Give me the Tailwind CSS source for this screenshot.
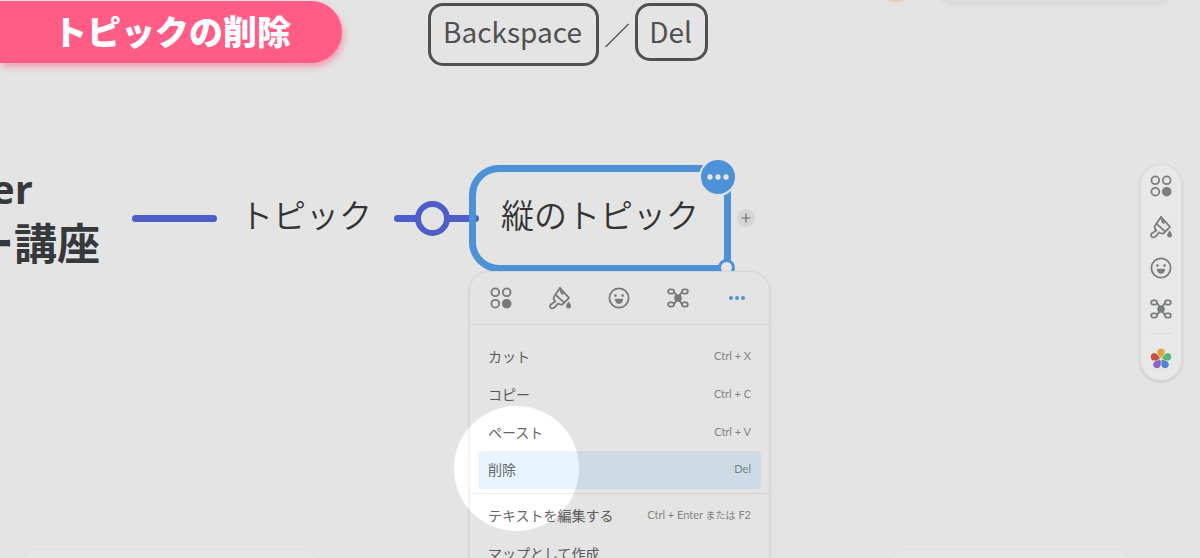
<!DOCTYPE html>
<html lang="ja">
<head>
  <meta charset="UTF-8">
  <meta name="viewport" content="width=device-width, initial-scale=1">
  <title>トピックの削除</title>
  <script src="https://cdn.jsdelivr.net/npm/@tailwindcss/browser@4"></script>
</head>
<body class="relative h-screen overflow-hidden bg-white font-['Noto_Sans_CJK_JP',sans-serif] text-[#3c4043]">

  <!-- Shared icons -->
  <svg class="hidden" aria-hidden="true">
    <symbol id="icon-style" viewBox="0 0 24 24" fill="none" stroke="currentColor" stroke-width="1.8">
      <circle cx="6.3" cy="6.3" r="3.9"/>
      <circle cx="17.7" cy="6.3" r="3.9"/>
      <circle cx="6.3" cy="17.7" r="3.9"/>
      <circle cx="17.7" cy="17.7" r="3.9" fill="currentColor"/>
    </symbol>
    <symbol id="icon-brush" viewBox="0 0 24 24" fill="none" stroke="currentColor" stroke-width="1.8" stroke-linejoin="round" stroke-linecap="round">
      <path d="M12 2L21 11.8L14.8 18C13.2 19.2 11.6 18.6 10.2 17.4L7.2 20.8C5.8 22.6 3.4 22.8 2.4 21.4C1.4 19.8 2.4 18.4 3.8 17.8L7.4 15.6C5.6 13.8 5 11.8 6.6 9.8Z"/>
      <path d="M7.6 8.8L16.2 16.6M12 2L13.6 7.2M15.4 5.8L14.6 8"/>
      <path d="M20.6 15.6C22 17.4 23 18.8 23 20.2A2.4 2.4 0 0 1 18.2 20.2C18.2 18.8 19.2 17.4 20.6 15.6Z" fill="currentColor" stroke="none"/>
    </symbol>
    <symbol id="icon-face" viewBox="0 0 24 24" fill="none" stroke="currentColor" stroke-width="1.8">
      <circle cx="12" cy="12" r="9.6"/>
      <circle cx="8.4" cy="9.6" r="1.3" fill="currentColor" stroke="none"/>
      <circle cx="15.6" cy="9.6" r="1.3" fill="currentColor" stroke="none"/>
      <path d="M7.8 12.8H16.2C16.2 15.8 14.4 17.8 12 17.8S7.8 15.8 7.8 12.8Z" fill="currentColor" stroke="none"/>
    </symbol>
    <symbol id="icon-map" viewBox="0 0 24 24" fill="none" stroke="currentColor" stroke-width="1.8">
      <path d="M7.4 5.6C9.4 6.4 9.6 9 12 12C14.4 9 14.6 6.4 16.6 5.6M7.4 18.4C9.4 17.6 9.6 15 12 12C14.4 15 14.6 17.6 16.6 18.4"/>
      <circle cx="12" cy="12" r="3.8" fill="currentColor" stroke="none"/>
      <rect x="2.2" y="3.4" width="5.8" height="4.2" rx="2.1"/>
      <rect x="16" y="3.4" width="5.8" height="4.2" rx="2.1"/>
      <rect x="2.2" y="16.4" width="5.8" height="4.2" rx="2.1"/>
      <rect x="16" y="16.4" width="5.8" height="4.2" rx="2.1"/>
    </symbol>
    <symbol id="icon-more" viewBox="0 0 24 24" fill="currentColor">
      <circle cx="6" cy="12" r="2"/>
      <circle cx="12" cy="12" r="2"/>
      <circle cx="18" cy="12" r="2"/>
    </symbol>
  </svg>

  <!-- Mind map canvas -->
  <main>
    <h2 class="absolute -left-[29px] top-[164px] whitespace-nowrap text-[43px] leading-[54px] font-bold">
      <span class="block pl-5 font-['Open_Sans',sans-serif] text-[40px] leading-[50px]">er</span>
      <span class="block">ー講座</span>
    </h2>
    <div class="absolute left-[132px] top-[215px] h-[7px] w-[85px] rounded-full bg-[#586ae0]"></div>
    <div class="absolute left-[240px] top-[190px] whitespace-nowrap text-[33px] leading-[48px] font-[350] text-[#3a3a3a]">トピック</div>

    <div class="absolute left-[394px] top-[215px] h-[7px] w-[85px] rounded-full bg-[#586ae0]"></div>
    <button type="button" aria-label="折りたたむ" class="absolute left-[415px] top-[201px] size-[35px] rounded-full border-[6px] border-[#586ae0] bg-white"></button>

    <div class="absolute left-[469px] top-[165px] flex h-[107px] w-[262px] items-start justify-center rounded-l-[30px] rounded-r-lg border-[7px] border-[#57a4f1] pt-[18px] text-[33px] leading-[48px] font-[350] whitespace-nowrap text-[#3a3a3a]">縦のトピック</div>
    <button type="button" aria-label="メニュー" class="absolute left-[699px] top-[158px] flex size-[38px] items-center justify-center rounded-full border-2 border-white bg-[#57a4f1] text-white">
      <svg class="size-8"><use href="#icon-more"/></svg>
    </button>
    <div class="absolute left-[718px] top-[259px] size-[17px] rounded-full border-3 border-[#57a4f1] bg-white"></div>
    <button type="button" aria-label="追加" class="absolute left-[737px] top-[209px] flex size-[18px] items-center justify-center rounded-full bg-[#efefef] text-[#777]">
      <svg class="size-[10px]" viewBox="0 0 10 10" stroke="currentColor" stroke-width="1.2"><path d="M5 0.5V9.5M0.5 5H9.5"/></svg>
    </button>
  </main>

  <!-- Context menu -->
  <div class="absolute left-[469px] top-[271px] w-[301px] rounded-t-[20px] border border-[#f0f0f0] bg-white shadow-sm">
    <div class="flex h-[53px] items-center justify-between border-b border-[#f2f2f2] pr-5 pl-[19px] text-[#868989]">
      <button type="button" aria-label="スタイル"><svg class="size-6"><use href="#icon-style"/></svg></button>
      <button type="button" aria-label="塗りつぶし"><svg class="size-6"><use href="#icon-brush"/></svg></button>
      <button type="button" aria-label="絵文字"><svg class="size-6"><use href="#icon-face"/></svg></button>
      <button type="button" aria-label="レイアウト"><svg class="size-6"><use href="#icon-map"/></svg></button>
      <button type="button" aria-label="その他" class="text-[#57a4f1]"><svg class="size-6"><use href="#icon-more"/></svg></button>
    </div>
    <div class="px-2 pt-3 text-[14px] text-[#666]">
      <button type="button" class="flex h-[38px] w-full items-center justify-between px-[10px]">カット<kbd class="font-['Lato','Noto_Sans_CJK_JP',sans-serif] text-[11px] text-[#929292]">Ctrl + X</kbd></button>
      <button type="button" class="flex h-[38px] w-full items-center justify-between px-[10px]">コピー<kbd class="font-['Lato','Noto_Sans_CJK_JP',sans-serif] text-[11px] text-[#929292]">Ctrl + C</kbd></button>
      <button type="button" class="flex h-[38px] w-full items-center justify-between px-[10px]">ペースト<kbd class="font-['Lato','Noto_Sans_CJK_JP',sans-serif] text-[11px] text-[#929292]">Ctrl + V</kbd></button>
      <button type="button" class="flex h-[38px] w-full items-center justify-between rounded-sm bg-[#e8f5ff] px-[10px] pb-px">削除<kbd class="font-['Lato','Noto_Sans_CJK_JP',sans-serif] text-[11px] text-[#7f93a0]">Del</kbd></button>
    </div>
    <div class="mt-1 border-t border-[#efefef] px-2 pt-[2px] text-[14px] text-[#666]">
      <button type="button" class="flex h-[38px] w-full items-center justify-between px-[10px]">テキストを編集する<kbd class="font-['Lato','Noto_Sans_CJK_JP',sans-serif] text-[11px] text-[#929292]">Ctrl + Enter <span class="text-[10px]">または</span> F2</kbd></button>
      <button type="button" class="flex h-[38px] w-full items-center justify-between px-[10px]">マップとして作成</button>
    </div>
  </div>

  <!-- Spotlight: dims everything outside the circle -->
  <div class="pointer-events-none absolute left-[454px] top-[406px] size-[125px] rounded-full shadow-[0_0_0_1600px_rgba(0,0,0,0.106)]"></div>

  <!-- Floating panels peeking in from the edges -->
  <div class="absolute left-[20px] top-[549px] h-6 w-[300px] rounded-t-2xl border border-[#dfdfdf] bg-[#e6e6e6]"></div>
  <div class="absolute left-[888px] top-[549px] h-6 w-[244px] rounded-t-2xl border border-[#dfdfdf] bg-[#e6e6e6]"></div>
  <div class="absolute left-[940px] -top-5 h-[22px] w-[230px] rounded-b-xl bg-[#dedede] shadow-md shadow-black/5"></div>
  <div class="absolute left-[882px] -top-[26px] size-7 rounded-full bg-[#e3cfa8] blur-[1px]"></div>

  <!-- Caption -->
  <header class="relative flex items-start pt-px">
    <h1 class="flex h-[62px] w-[342px] items-center rounded-r-full bg-[#ff5c86] pb-[2px] pl-[53px] text-[34px] leading-none font-black whitespace-nowrap text-white shadow-[2px_4px_6px_rgba(255,92,134,0.5)]">トピックの削除</h1>
    <div class="ml-[86px] flex items-start pt-[2px] text-[28px] text-[#505050]">
      <kbd class="flex h-[63px] w-[171px] justify-center rounded-[15px] border-3 border-[#505050] pt-1 pr-[2px] font-['Noto_Sans_CJK_JP',sans-serif] leading-[42px]">Backspace</kbd>
      <svg class="mx-[6px] mt-5 size-6" viewBox="0 0 24 24" stroke="currentColor" stroke-width="1.3"><path d="M0.5 24L23.5 1"/></svg>
      <kbd class="flex h-[58px] w-[73px] justify-center rounded-[15px] border-3 border-[#505050] pt-1 pr-[2px] font-['Noto_Sans_CJK_JP',sans-serif] leading-[42px]">Del</kbd>
    </div>
  </header>

  <!-- Side toolbar -->
  <aside class="absolute right-[18px] top-[164px] flex w-[42px] flex-col items-center rounded-full border border-[#dedede] bg-[#e8e8e8] pt-[9px] pb-[9px] text-[#7b7e7e] shadow-[0_1px_3px_rgba(0,0,0,0.15)]">
    <div class="flex flex-col gap-[17px]">
      <button type="button" aria-label="スタイル"><svg class="size-6"><use href="#icon-style"/></svg></button>
      <button type="button" aria-label="塗りつぶし"><svg class="size-6"><use href="#icon-brush"/></svg></button>
      <button type="button" aria-label="絵文字"><svg class="size-6"><use href="#icon-face"/></svg></button>
      <button type="button" aria-label="レイアウト"><svg class="size-6"><use href="#icon-map"/></svg></button>
    </div>
    <hr class="mt-3 mb-[13px] w-5 border-[#dadada]">
    <button type="button" aria-label="テーマ">
      <svg class="size-6" viewBox="0 0 24 24">
        <defs><path id="petal" d="M12 11C9.2 8.4 8 6.2 8.3 4.4C8.7 2.4 10.3 1.4 12 1.4S15.3 2.4 15.7 4.4C16 6.2 14.8 8.4 12 11Z"/></defs>
        <use href="#petal" fill="#d9a441"/>
        <use href="#petal" fill="#5fb573" transform="rotate(72 12 12)"/>
        <use href="#petal" fill="#4a86cf" transform="rotate(144 12 12)"/>
        <use href="#petal" fill="#8a63c4" transform="rotate(216 12 12)"/>
        <use href="#petal" fill="#c8503c" transform="rotate(288 12 12)"/>
      </svg>
    </button>
  </aside>
</body>
</html>
